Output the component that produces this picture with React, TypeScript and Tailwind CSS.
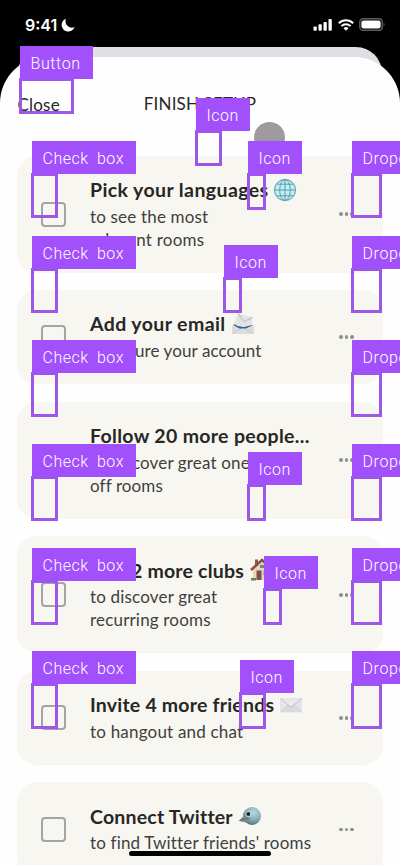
import React from "react";
import { clsx } from "clsx";

interface Line {
  text: string;
  tracking: string;
}

interface Task {
  title: string;
  tracking: string;
  lines: Line[];
  emoji?: React.ReactNode;
}

interface Marker {
  label: string;
  place: string;
  box: string;
}

const Globe = () => (
  <svg viewBox="0 0 24 24" className="w-6 h-6 ml-[5px]">
    <circle cx="12" cy="12" r="11.3" fill="#c3eef2" />
    <g fill="none" stroke="#5f9cab" strokeWidth="1">
      <circle cx="12" cy="12" r="10.5" />
      <ellipse cx="12" cy="12" rx="5.3" ry="10.5" />
      <path d="M12 1.5v21M1.5 12h21M3.4 6.2h17.2M3.4 17.8h17.2" />
    </g>
  </svg>
);

const EmailEnvelope = () => (
  <svg viewBox="0 0 24 24" className="w-6 h-6 ml-[5px]">
    <path d="M2.5 13 7 1.5 21.5 5.5 20.5 15z" fill="#e3e3e6" />
    <path d="M7 1.5 13 9.5 21.5 5.5" fill="none" stroke="#b4b5ba" strokeWidth=".9" />
    <path d="m2.5 12 4.5 2 6 1 8-2 1.5 1-2 4H4z" fill="#2f6296" />
    <path d="M1 12.5 9.5 17h4.5l9-4.5V22H1z" fill="#dcdcdf" />
    <path d="m1.5 21.5 8.5-5h4l8.5 5" fill="none" stroke="#c0c0c5" strokeWidth=".7" />
  </svg>
);

const House = () => (
  <svg viewBox="0 0 24 24" className="w-6 h-6 ml-[6px]">
    <path d="M3 11 12 3l9 8v11H3z" fill="#ecd4b5" />
    <path d="M5 1.5h3V8H5z" fill="#8d5747" />
    <path d="m1 12 11-10 11 10" fill="none" stroke="#8b5145" strokeWidth="2.6" />
    <path d="M6.5 12.5h5V22h-5z" fill="#79534a" />
    <path d="M13.5 13h5v4h-5zM10 7h4v3h-4z" fill="#668797" />
    <path d="M1 20h5v2.5H1zM14 20h8v2.5h-8z" fill="#6a8051" />
  </svg>
);

const Envelope = () => (
  <svg viewBox="0 0 24 24" className="w-6 h-6 ml-[5px]">
    <rect x="1" y="5" width="22" height="14.5" rx="1" fill="#e4e3e6" />
    <path d="m1.5 19 8-7h5l8 7" fill="#dad9dd" stroke="#c8c7cc" strokeWidth=".7" />
    <path d="m1.5 5.5 9.3 8q1.2.8 2.4 0l9.3-8" fill="#e9e8eb" stroke="#b9b8be" strokeWidth=".9" />
  </svg>
);

const Bird = () => (
  <svg viewBox="0 0 24 24" className="w-6 h-6 ml-[5px]">
    <defs>
      <radialGradient id="bird" cx=".6" cy=".3" r=".7">
        <stop offset="0" stopColor="#b5dce0" />
        <stop offset=".6" stopColor="#86aeb5" />
        <stop offset="1" stopColor="#54777e" />
      </radialGradient>
    </defs>
    <circle cx="14" cy="12" r="9" fill="url(#bird)" />
    <path d="M8 11Q4 12.500.8 16.800q4 2 9 1.200 3.600-3.400 1-5.500z" fill="#7c898c" />
    <path d="m1.500 16.500 8-2" stroke="#56666a" strokeWidth=".8" />
    <circle cx="10.5" cy="10" r="3" fill="#c5dcde" />
    <circle cx="10.3" cy="10" r="2" fill="#17282c" />
  </svg>
);

const tasks: Task[] = [
  {
    title: "Pick your languages",
    tracking: "tracking-[0.4px]",
    emoji: <Globe />,
    lines: [
      { text: "to see the most", tracking: "tracking-[0.18px]" },
      { text: "relevant rooms", tracking: "tracking-[0.25px]" },
    ],
  },
  {
    title: "Add your email",
    tracking: "tracking-[0.4px]",
    emoji: <EmailEnvelope />,
    lines: [{ text: "to secure your account", tracking: "tracking-[0.09px]" }],
  },
  {
    title: "Follow 20 more people...",
    tracking: "tracking-[0.32px]",
    lines: [
      { text: "to discover great one-", tracking: "tracking-[0.15px]" },
      { text: "off rooms", tracking: "tracking-[0.12px]" },
    ],
  },
  {
    title: "Join 2 more clubs",
    tracking: "tracking-[0.2px]",
    emoji: <House />,
    lines: [
      { text: "to discover great", tracking: "tracking-[0.18px]" },
      { text: "recurring rooms", tracking: "tracking-[0.18px]" },
    ],
  },
  {
    title: "Invite 4 more friends",
    tracking: "tracking-[0.2px]",
    emoji: <Envelope />,
    lines: [{ text: "to hangout and chat", tracking: "tracking-[0.2px]" }],
  },
  {
    title: "Connect Twitter",
    tracking: "tracking-[0.2px]",
    emoji: <Bird />,
    lines: [{ text: "to find Twitter friends' rooms", tracking: "tracking-[0.17px]" }],
  },
];

const markers: Marker[] = [
  { label: "Button", place: "left-[19px] top-[46px]", box: "w-[55px] h-[36px]" },
  { label: "Icon", place: "left-[195px] top-[98px]", box: "w-[27px] h-[36px]" },
  { label: "Check box", place: "left-[31px] top-[141px]", box: "w-[27px] h-[45px]" },
  { label: "Icon", place: "left-[247px] top-[141px]", box: "w-[19px] h-[37px]" },
  { label: "Dropdown", place: "left-[351px] top-[141px]", box: "w-[31px] h-[45px]" },
  { label: "Check box", place: "left-[31px] top-[236px]", box: "w-[27px] h-[45px]" },
  { label: "Icon", place: "left-[223px] top-[245px]", box: "w-[19px] h-[36px]" },
  { label: "Dropdown", place: "left-[351px] top-[236px]", box: "w-[31px] h-[45px]" },
  { label: "Check box", place: "left-[31px] top-[340px]", box: "w-[27px] h-[45px]" },
  { label: "Dropdown", place: "left-[351px] top-[340px]", box: "w-[31px] h-[45px]" },
  { label: "Check box", place: "left-[31px] top-[444px]", box: "w-[27px] h-[45px]" },
  { label: "Icon", place: "left-[247px] top-[452px]", box: "w-[19px] h-[37px]" },
  { label: "Dropdown", place: "left-[351px] top-[444px]", box: "w-[31px] h-[45px]" },
  { label: "Check box", place: "left-[31px] top-[548px]", box: "w-[27px] h-[45px]" },
  { label: "Icon", place: "left-[263px] top-[556px]", box: "w-[19px] h-[37px]" },
  { label: "Dropdown", place: "left-[351px] top-[548px]", box: "w-[31px] h-[45px]" },
  { label: "Check box", place: "left-[31px] top-[651px]", box: "w-[27px] h-[46px]" },
  { label: "Icon", place: "left-[239px] top-[660px]", box: "w-[27px] h-[37px]" },
  { label: "Dropdown", place: "left-[351px] top-[651px]", box: "w-[31px] h-[46px]" },
];

const labelStyles: Record<string, string> = {
  Button: "w-[73px] tracking-[0.6px]",
  Icon: "w-[54px] tracking-[0.5px]",
  "Check box": "w-[104px] tracking-[0.5px] [word-spacing:4px]",
  Dropdown: "w-[104px] tracking-[0.6px]",
};

const StatusBar = () => (
  <div className="h-[47px] pt-[2px] pl-[25px] pr-[14px] flex items-center justify-between text-white">
    <div className="flex items-center gap-1">
      <span className="font-[Inter,sans-serif] font-semibold text-[16px] leading-5">9:41</span>
      <svg viewBox="0 0 14 14" className="w-[14px] h-[14px]">
        <path d="M5 .7A6.6 6.6 0 1 0 13.5 9 6.4 6.4 0 0 1 5 .7Z" fill="white" />
      </svg>
    </div>
    <div className="flex items-center gap-[5px]">
      <svg viewBox="0 0 20 12" className="w-5 h-3" fill="white">
        <rect x=".5" y="7.5" width="3.3" height="4.2" rx="1" />
        <rect x="5.5" y="5.3" width="3.3" height="6.4" rx="1" />
        <rect x="10.5" y="3" width="3.3" height="8.7" rx="1" />
        <rect x="15.5" y="0" width="3.3" height="11.7" rx="1" />
      </svg>
      <svg viewBox="0 0 16 12" className="w-4 h-3" fill="none" stroke="white" strokeWidth="2">
        <path d="M.8 4.2a10.4 10.4 0 0 1 14.4 0" />
        <path d="M3.4 7.1a6.6 6.6 0 0 1 9.2 0" />
        <path d="M8 11.7 5.5 9.2a3.6 3.6 0 0 1 5 0Z" fill="white" stroke="none" />
      </svg>
      <svg viewBox="0 0 27 13" className="w-[27px] h-[13px]">
        <rect x=".8" y=".8" width="22.4" height="11.4" rx="3.3" fill="none" stroke="#5c5c5e" strokeWidth="1.4" />
        <rect x="2.4" y="2.4" width="19.2" height="8.2" rx="2" fill="white" />
        <path d="M24.6 4.4q2 2 0 4.2z" fill="#5c5c5e" />
      </svg>
    </div>
  </div>
);

const TaskCard: React.FC<{ task: Task }> = ({ task }) => (
  <div
    className={clsx(
      "shrink-0 flex items-center rounded-[20px] bg-[#f7f6f1] pl-6 pr-[29px]",
      task.lines.length === 2 ? "h-[117px]" : "h-[94px]"
    )}
  >
    <div className="w-[25px] h-[25px] shrink-0 rounded-[4px] border-2 border-[#a4a4a2]" />
    <div className="ml-[24px] grow whitespace-nowrap text-[#272725]">
      <div className="flex items-center h-[27px] pb-[3px]">
        <h3 className={clsx("text-[19.5px] font-bold", task.tracking)}>{task.title}</h3>
        {task.emoji}
      </div>
      {task.lines.map((line) => (
        <p key={line.text} className="text-[17px] leading-[23px] text-[#3f3f3d]">
          <span className={line.tracking}>{line.text}</span>
        </p>
      ))}
    </div>
    <div className="flex gap-[2px]">
      <span className="w-[3.5px] h-[3.5px] rounded-full bg-[#8e8e8c]" />
      <span className="w-[3.5px] h-[3.5px] rounded-full bg-[#8e8e8c]" />
      <span className="w-[3.5px] h-[3.5px] rounded-full bg-[#8e8e8c]" />
    </div>
  </div>
);

const MarkerTag: React.FC<{ marker: Marker }> = ({ marker }) => (
  <div className={clsx("absolute", marker.place)}>
    <div
      className={clsx(
        "relative z-10 ml-px h-[33px] pt-[2px] pl-[10.5px] flex items-center whitespace-nowrap bg-[#a250fb] text-white text-[16px]",
        "font-['Roboto',sans-serif] font-light",
        labelStyles[marker.label]
      )}
    >
      {marker.label}
    </div>
    <div className={clsx("-mt-px border-[3px] border-[#9b57e8]", marker.box)} />
  </div>
);

export default function App() {
  return (
    <div className="relative w-[400px] h-[865px] overflow-hidden bg-black font-['Lato',sans-serif]">
      <StatusBar />
      <div className="mx-[18px] h-[10px]">
        <div className="h-10 rounded-t-[26px] bg-[#e0dfe3]" />
      </div>
      <div className="relative h-[808px] overflow-hidden rounded-t-[46px] bg-[#fefefe]">
        <header className="grid grid-cols-[1fr_auto_1fr] items-center h-[98.5px] px-[17.5px] pb-[4.5px] text-[17px] text-[#272725]">
          <span className="pt-[2px] tracking-[0.2px]">Close</span>
          <h1 className="tracking-[0.15px]">FINISH SETUP</h1>
        </header>
        <main className="flex flex-col gap-[17.6px] pl-[17px] pr-[17.5px]">
          {tasks.map((task) => (
            <TaskCard key={task.title} task={task} />
          ))}
        </main>
      </div>
      <div className="absolute left-[254px] top-[122px] w-[31px] h-[31px] rounded-full bg-[#9e9a9f]" />
      <div className="absolute left-[129px] top-[851px] w-[142px] h-[5px] rounded-full bg-black" />
      {markers.map((marker) => (
        <MarkerTag key={marker.place} marker={marker} />
      ))}
    </div>
  );
}
